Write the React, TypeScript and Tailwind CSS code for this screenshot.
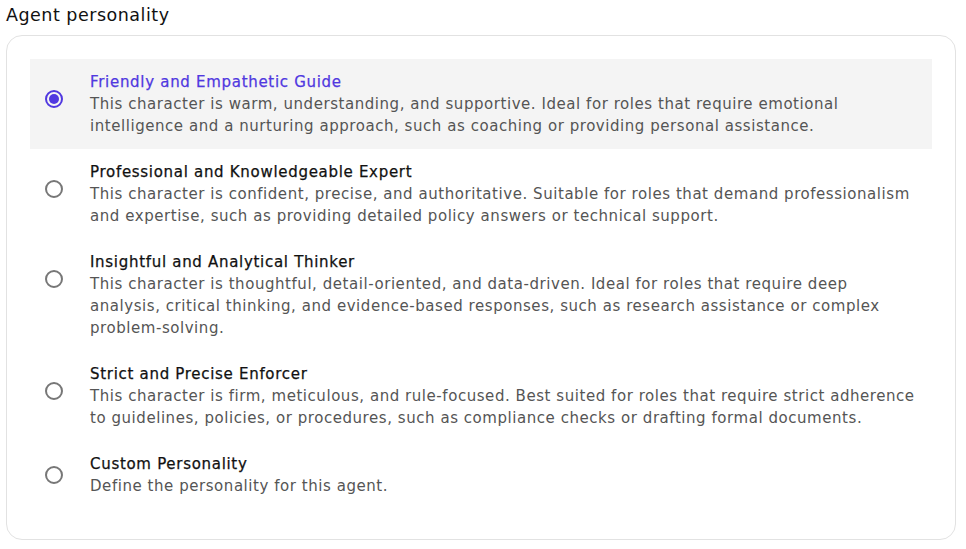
import React, { useState } from "react";

/* =======================
   DATA
======================= */
interface Personality {
  id: string;
  title: string;
  lines: string[];
}

const PERSONALITIES: Personality[] = [
  {
    id: "friendly",
    title: "Friendly and Empathetic Guide",
    lines: [
      "This character is warm, understanding, and supportive. Ideal for roles that require emotional",
      "intelligence and a nurturing approach, such as coaching or providing personal assistance.",
    ],
  },
  {
    id: "professional",
    title: "Professional and Knowledgeable Expert",
    lines: [
      "This character is confident, precise, and authoritative. Suitable for roles that demand professionalism",
      "and expertise, such as providing detailed policy answers or technical support.",
    ],
  },
  {
    id: "insightful",
    title: "Insightful and Analytical Thinker",
    lines: [
      "This character is thoughtful, detail-oriented, and data-driven. Ideal for roles that require deep",
      "analysis, critical thinking, and evidence-based responses, such as research assistance or complex",
      "problem-solving.",
    ],
  },
  {
    id: "strict",
    title: "Strict and Precise Enforcer",
    lines: [
      "This character is firm, meticulous, and rule-focused. Best suited for roles that require strict adherence",
      "to guidelines, policies, or procedures, such as compliance checks or drafting formal documents.",
    ],
  },
  {
    id: "custom",
    title: "Custom Personality",
    lines: ["Define the personality for this agent."],
  },
];

/* =======================
   COMPONENT
======================= */
export default function App() {
  const [selected, setSelected] = useState("friendly");

  return (
    <div
      className="w-[966px] h-[549px] bg-white px-[6px] pt-[3px]"
      style={{ fontFamily: '"DejaVu Sans", "Liberation Sans", sans-serif' }}
    >
      <h2 className="text-[17.5px] tracking-[0.5px] leading-[24px] text-[#111] mb-[8px]">
        Agent personality
      </h2>

      <div className="w-[950px] border border-[#e2e2e2] rounded-[16px] pt-[23px] pb-[30px] px-[23px]">
        {PERSONALITIES.map((p) => {
          const active = p.id === selected;
          // radio sits centred in the top 80px of the row
          const radioTop = p.lines.length === 1 ? "mt-[13px]" : "mt-[19px]";
          return (
            <div
              key={p.id}
              onClick={() => setSelected(p.id)}
              className={
                "flex items-start pl-[15px] py-[12px] cursor-pointer " +
                (active ? "bg-[#f4f4f4]" : "bg-white")
              }
            >
              <div className={radioTop + " w-[18px] h-[18px] shrink-0"}>
                {active ? (
                  <div className="w-[18px] h-[18px] rounded-full border-2 border-[#5038e0] flex items-center justify-center">
                    <div className="w-[10px] h-[10px] rounded-full bg-[#5038e0]" />
                  </div>
                ) : (
                  <div className="w-[18px] h-[18px] rounded-full border-2 border-[#777]" />
                )}
              </div>
              <div className="ml-[27px]">
                <div
                  className={
                    "text-[15px] tracking-[0.7px] leading-[22px] [-webkit-text-stroke:0.25px_currentColor] " +
                    (active ? "text-[#5038e0]" : "text-[#111]")
                  }
                >
                  {p.title}
                </div>
                <div className="text-[15px] tracking-[0.55px] leading-[22px] text-[#555] whitespace-nowrap">
                  {p.lines.map((l, i) => (
                    <div key={i}>{l}</div>
                  ))}
                </div>
              </div>
            </div>
          );
        })}
      </div>
    </div>
  );
}
